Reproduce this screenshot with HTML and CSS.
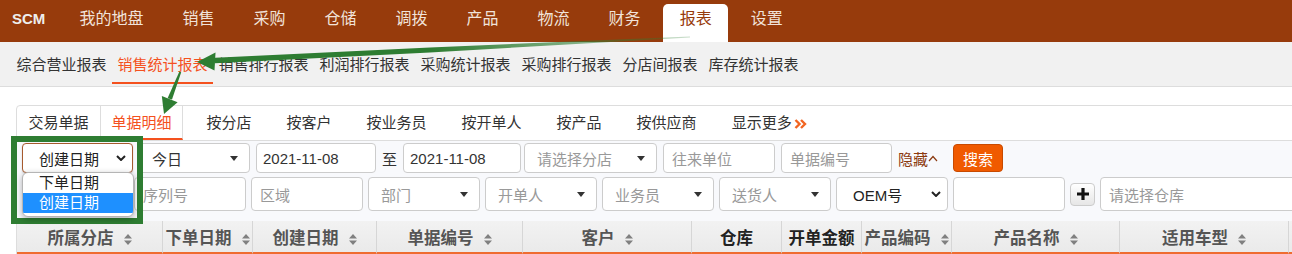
FILE: index.html
```html
<!DOCTYPE html>
<html lang="zh-CN">
<head>
    <meta charset="UTF-8">
    <meta name="viewport" content="width=device-width, initial-scale=1.0">
    <title>SCM - 销售统计报表</title>
    <link rel="stylesheet" href="styles.css">
</head>
<body>
    <header class="topbar">
        <div class="logo">SCM</div>
        <nav class="mainnav">
            <a>我的地盘</a>
            <a>销售</a>
            <a>采购</a>
            <a>仓储</a>
            <a>调拨</a>
            <a>产品</a>
            <a>物流</a>
            <a>财务</a>
            <a class="on">报表</a>
            <a>设置</a>
        </nav>
    </header>

    <div class="subnav">
        <a>综合营业报表</a>
        <a class="on">销售统计报表</a>
        <a>销售排行报表</a>
        <a>利润排行报表</a>
        <a>采购统计报表</a>
        <a>采购排行报表</a>
        <a>分店间报表</a>
        <a>库存统计报表</a>
    </div>

    <div class="content">
        <div class="panel">
            <div class="tabs">
                <a class="tab">交易单据</a>
                <a class="tab on">单据明细</a>
                <a class="tab plain first">按分店</a>
                <a class="tab plain">按客户</a>
                <a class="tab plain">按业务员</a>
                <a class="tab plain">按开单人</a>
                <a class="tab plain">按产品</a>
                <a class="tab plain">按供应商</a>
                <a class="tab plain">显示更多<svg class="more" width="13" height="10" viewBox="0 0 13 10"><path d="M1.5 1l4 4-4 4M7 1l4 4-4 4"/></svg></a>
            </div>

            <div class="filters">
                <div class="frow r1">
                    <div class="field native f-type">创建日期<svg class="chev" width="10" height="6" viewBox="0 0 10 6"><path d="M1 1l4 4 4-4"/></svg>
                        <ul class="dropdown">
                            <li>下单日期</li>
                            <li class="hl">创建日期</li>
                        </ul>
                    </div>
                    <div class="field sel val f-period">今日<svg class="caret" width="8" height="5" viewBox="0 0 8 5"><path d="M0 0h8L4 5z"/></svg></div>
                    <div class="field val f-date">2021-11-08</div>
                    <span class="to">至</span>
                    <div class="field val f-date2">2021-11-08</div>
                    <div class="field sel f-shop">请选择分店<svg class="caret" width="8" height="5" viewBox="0 0 8 5"><path d="M0 0h8L4 5z"/></svg></div>
                    <div class="field f-112">往来单位</div>
                    <div class="field f-111">单据编号</div>
                    <a class="toggle">隐藏<svg width="10" height="7" viewBox="0 0 10 7"><path d="M1 6l4-4.5L9 6"/></svg></a>
                    <button class="btn-search">搜索</button>
                </div>
                <div class="frow r2">
                    <div class="field f-first"></div>
                    <div class="field f-112">序列号</div>
                    <div class="field f-112">区域</div>
                    <div class="field sel f-112">部门<svg class="caret" width="8" height="5" viewBox="0 0 8 5"><path d="M0 0h8L4 5z"/></svg></div>
                    <div class="field sel f-112">开单人<svg class="caret" width="8" height="5" viewBox="0 0 8 5"><path d="M0 0h8L4 5z"/></svg></div>
                    <div class="field sel f-112">业务员<svg class="caret" width="8" height="5" viewBox="0 0 8 5"><path d="M0 0h8L4 5z"/></svg></div>
                    <div class="field sel f-112">送货人<svg class="caret" width="8" height="5" viewBox="0 0 8 5"><path d="M0 0h8L4 5z"/></svg></div>
                    <div class="field native val f-oem">OEM号<svg class="chev" width="10" height="6" viewBox="0 0 10 6"><path d="M1 1l4 4 4-4"/></svg></div>
                    <div class="field f-112"></div>
                    <button class="btn-add"><svg width="12" height="12" viewBox="0 0 12 12"><path d="M6 0v12M0 6h12"/></svg></button>
                    <div class="field f-store">请选择仓库</div>
                </div>
            </div>

            <table class="grid">
                <colgroup>
                    <col style="width:146px"><col style="width:90px"><col style="width:124px">
                    <col style="width:146px"><col style="width:169px"><col style="width:90px">
                    <col style="width:80px"><col style="width:90px"><col style="width:168px">
                    <col style="width:169px"><col style="width:120px">
                </colgroup>
                <thead>
                    <tr>
                        <th>所属分店<svg class="sort" width="8" height="11" viewBox="0 0 8 11"><path d="M0 4.5L4 0l4 4.5zM0 6.5h8L4 11z"/></svg></th>
                        <th>下单日期<svg class="sort" width="8" height="11" viewBox="0 0 8 11"><path d="M0 4.5L4 0l4 4.5zM0 6.5h8L4 11z"/></svg></th>
                        <th>创建日期<svg class="sort" width="8" height="11" viewBox="0 0 8 11"><path d="M0 4.5L4 0l4 4.5zM0 6.5h8L4 11z"/></svg></th>
                        <th>单据编号<svg class="sort" width="8" height="11" viewBox="0 0 8 11"><path d="M0 4.5L4 0l4 4.5zM0 6.5h8L4 11z"/></svg></th>
                        <th>客户<svg class="sort" width="8" height="11" viewBox="0 0 8 11"><path d="M0 4.5L4 0l4 4.5zM0 6.5h8L4 11z"/></svg></th>
                        <th class="dark">仓库</th>
                        <th class="dark">开单金额</th>
                        <th>产品编码<svg class="sort" width="8" height="11" viewBox="0 0 8 11"><path d="M0 4.5L4 0l4 4.5zM0 6.5h8L4 11z"/></svg></th>
                        <th>产品名称<svg class="sort" width="8" height="11" viewBox="0 0 8 11"><path d="M0 4.5L4 0l4 4.5zM0 6.5h8L4 11z"/></svg></th>
                        <th>适用车型<svg class="sort" width="8" height="11" viewBox="0 0 8 11"><path d="M0 4.5L4 0l4 4.5zM0 6.5h8L4 11z"/></svg></th>
                        <th></th>
                    </tr>
                </thead>
            </table>
        </div>
    </div>

    <!-- annotation marks drawn over the screenshot -->
    <svg class="marks" width="1292" height="254" viewBox="0 0 1292 254">
        <defs>
            <linearGradient id="fade" x1="690" y1="0" x2="430" y2="0" gradientUnits="userSpaceOnUse">
                <stop offset="0" stop-color="#2e7d32" stop-opacity="0.25"/>
                <stop offset="1" stop-color="#2e7d32"/>
            </linearGradient>
        </defs>
        <rect x="14" y="139" width="126" height="82" fill="none" stroke="#2e7d32" stroke-width="6"/>
        <polygon points="690,36.4 690,37.6 430,52.4 215,63.2 215,57.8 430,47.4" fill="url(#fade)"/>
        <polygon points="197,62 215.5,52.5 214.5,70.5" fill="#2e7d32"/>
        <polygon points="179.4,71.6 181.2,72.2 172,99.6 167.6,98.2" fill="#2e7d32"/>
        <polygon points="164,114 161.8,96 177.6,102.2" fill="#2e7d32"/>
    </svg>
</body>
</html>
```

FILE: styles.css
```css
* {
    box-sizing: border-box;
}
html, body {
    overflow: hidden;
}
body {
    position: relative;
    margin: 0;
    width: 1292px;
    height: 254px;
    background-color: #fff;
    color: #333;
    font-family: "Liberation Sans", "Noto Sans CJK SC", sans-serif;
    font-size: 15px;
}
a {
    cursor: pointer;
}

/* top bar */
.topbar {
    display: flex;
    height: 42px;
    background-color: #973b0c;
}
.logo {
    width: 60px;
    padding-left: 12px;
    line-height: 37px;
    font-size: 15px;
    font-weight: bold;
    color: #eee;
}
.mainnav {
    display: flex;
}
.mainnav a {
    height: 38px;
    margin: 4px 3px 0;
    padding: 0 16.5px;
    line-height: 30px;
    font-size: 16px;
    color: #f1e3da;
    border-radius: 5px 5px 0 0;
}
.mainnav a.on {
    background-color: #fff;
    color: #973b0c;
}

/* report sub menu */
.subnav {
    display: flex;
    height: 45px;
    padding-left: 11px;
    background-color: #f1f1f1;
    border-bottom: 1px solid #ddd;
}
.subnav a {
    height: 42px;
    padding: 5px 5.5px 0;
    line-height: 35px;
    border-bottom: 2px solid transparent;
    white-space: nowrap;
}
.subnav a.on {
    color: #f4511e;
    border-bottom-color: #f4511e;
}

/* panel */
.content {
    padding: 18px 0 0 16px;
}
.panel {
    width: 1400px;
    border: 1px solid #ddd;
    border-radius: 4px 0 0 0;
}
.tabs {
    display: flex;
    height: 35px;
    border-bottom: 1px solid #ddd;
}
.tab {
    height: 34px;
    padding: 1px 11.5px 0;
    line-height: 31px;
    border-bottom: 2px solid transparent;
    white-space: nowrap;
}
.tab.on {
    padding: 1px 10.5px 0;
    color: #f4511e;
    background-color: #fff;
    border-left: 1px solid #ddd;
    border-right: 1px solid #ddd;
    border-bottom-color: #f4511e;
}
.tab.plain {
    padding: 1px 17.5px 0;
}
.tab.first {
    margin-left: 6px;
}
.more {
    margin-left: 2px;
    vertical-align: -1px;
}
.more path {
    fill: none;
    stroke: #f26522;
    stroke-width: 2.4;
}

/* filters */
.filters {
    padding: 2px 0 10px 5px;
    background-color: #f8f9fc;
}
.frow {
    display: flex;
    align-items: center;
}
.r1 {
    height: 30px;
    gap: 6px;
    margin-bottom: 4px;
}
.r2 {
    height: 34px;
    gap: 5px;
}
.field {
    position: relative;
    display: flex;
    align-items: center;
    justify-content: space-between;
    flex: none;
    height: 100%;
    padding: 0 8px;
    background-color: #fff;
    border: 1px solid #ccc;
    border-radius: 4px;
    color: #999;
    white-space: nowrap;
}
.field.val {
    color: #333;
}
.field.sel {
    padding: 0 11px 0 12px;
}
.field.native {
    padding: 0 6px 0 16px;
    color: #222;
}
.caret path {
    fill: #333;
}
.chev path {
    fill: none;
    stroke: #222;
    stroke-width: 2;
}
.f-type {
    width: 111px;
    border-color: #a65a2e;
    box-shadow: 0 1px 2px rgba(0, 0, 0, 0.15);
}
.f-period {
    width: 111px;
    padding-left: 9px;
}
.f-date {
    width: 120px;
    padding-left: 6px;
}
.f-date2 {
    width: 118px;
    padding-left: 6px;
}
.f-shop {
    width: 133px;
    margin-left: -3px;
    padding: 0 9px 0 10px;
}
.f-112 {
    width: 112px;
}
.f-111 {
    width: 111px;
}
.f-first {
    width: 107px;
}
.f-oem {
    width: 112px;
    padding: 0 7px 0 10px;
}
.f-store {
    width: 250px;
}
.to {
    flex: none;
}
.toggle {
    display: flex;
    align-items: center;
    color: #8b3a10;
    white-space: nowrap;
}
.toggle path {
    fill: none;
    stroke: #8b3a10;
    stroke-width: 1.2;
}
.btn-search {
    height: 28px;
    width: 50px;
    margin-left: 9px;
    padding: 0;
    background-color: #f05a00;
    border: 1px solid #c84a00;
    border-radius: 4px;
    color: #fff;
    font-family: inherit;
    font-size: 15px;
}
.btn-add {
    display: flex;
    align-items: center;
    justify-content: center;
    flex: none;
    width: 25px;
    height: 23px;
    padding: 0;
    background: linear-gradient(#fff, #e6e6e6);
    border: 1px solid #ccc;
    border-radius: 4px;
}
.btn-add path {
    stroke: #111;
    stroke-width: 3.2;
}

/* open select list */
.dropdown {
    position: absolute;
    left: -1px;
    top: 28px;
    z-index: 5;
    width: 112px;
    margin: 0;
    padding: 0 0 3px;
    list-style: none;
    background-color: #fff;
    border: 1px solid #b5b5b5;
    border-radius: 6px;
    box-shadow: 0 2px 6px rgba(0, 0, 0, 0.3);
    color: #222;
    overflow: hidden;
}
.dropdown li {
    padding-left: 16px;
    line-height: 20px;
}
.dropdown li.hl {
    background-color: #1e90ff;
    color: #fff;
}

/* table header */
.grid {
    table-layout: fixed;
    border-collapse: separate;
    border-spacing: 0;
}
.grid th {
    height: 33px;
    padding: 0;
    background: linear-gradient(#f2f2f2, #eaeaea);
    border-right: 1px solid #d6d6d6;
    border-bottom: 2px solid #ef6c30;
    color: #555;
    font-size: 16.5px;
    font-weight: bold;
    text-align: center;
    white-space: nowrap;
    overflow: hidden;
}
.grid th.dark {
    color: #222;
}
.sort {
    margin-left: 10px;
    vertical-align: -1px;
}
.sort path {
    fill: #808080;
}

/* annotations */
.marks {
    position: absolute;
    left: 0;
    top: 0;
    pointer-events: none;
}
```
